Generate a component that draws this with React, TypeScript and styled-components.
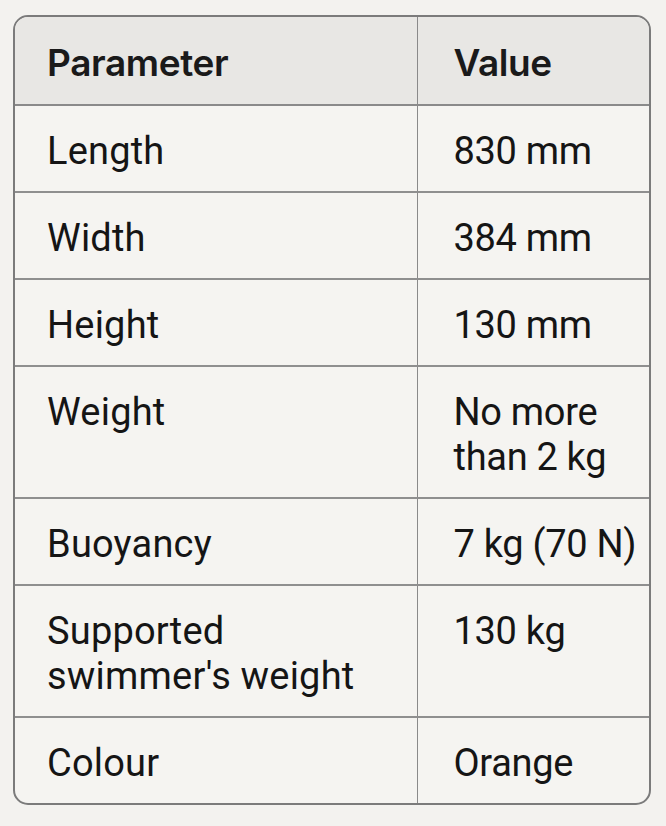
import React from "react";
import styled, { createGlobalStyle } from "styled-components";

const GlobalStyle = createGlobalStyle`
  html, body {
    margin: 0;
    padding: 0;
    background: #f3f2ef;
  }
  body {
    font-family: Roboto, "Liberation Sans", Arial, sans-serif;
    color: #151515;
  }
  *, *::before, *::after {
    box-sizing: border-box;
  }
`;

const Page = styled.div`
  padding: 15px 15px 18px 13px;
`;

const Frame = styled.div`
  border: 2px solid #7b7b7b;
  border-radius: 15px;
  overflow: hidden;
  background: #f5f4f1;
`;

const Table = styled.table`
  width: 100%;
  border-collapse: collapse;
  table-layout: fixed;
`;

const HeadCell = styled.th<{ first?: boolean }>`
  background: #e8e7e4;
  font-family: Inter, "Noto Sans", sans-serif;
  font-weight: 600;
  font-size: 37px;
  letter-spacing: -0.4px;
  text-align: left;
  line-height: 45px;
  padding: 23px 8px 19px ${({ first }) => (first ? "32px" : "36px")};
  width: ${({ first }) => (first ? "402px" : "auto")};
  border-bottom: 2px solid #8a8a8a;
  border-right: ${({ first }) => (first ? "1.5px solid #8a8a8a" : "none")};
  color: #1a1a1a;
`;

const Row = styled.tr<{ last?: boolean }>`
  & > td {
    border-bottom: ${({ last }) => (last ? "none" : "2px solid #8f8f8f")};
  }
`;

const Cell = styled.td<{ first?: boolean }>`
  font-size: 38px;
  line-height: 45px;
  vertical-align: top;
  white-space: nowrap;
  letter-spacing: ${({ first }) => (first ? "0.2px" : "-0.3px")};
  padding: 22.5px 4px 17.5px ${({ first }) => (first ? "32px" : "36px")};
  border-right: ${({ first }) => (first ? "1.5px solid #8a8a8a" : "none")};
  color: #151515;
`;

const rows: [React.ReactNode, React.ReactNode][] = [
  ["Length", "830 mm"],
  ["Width", "384 mm"],
  ["Height", "130 mm"],
  ["Weight", <>No more<br />than 2 kg</>],
  ["Buoyancy", "7 kg (70 N)"],
  [<>Supported<br />swimmer's weight</>, "130 kg"],
  ["Colour", "Orange"],
];

export default function App() {
  return (
    <>
      <GlobalStyle />
      <Page>
        <Frame>
          <Table>
            <thead>
              <tr>
                <HeadCell first>Parameter</HeadCell>
                <HeadCell>Value</HeadCell>
              </tr>
            </thead>
            <tbody>
              {rows.map(([p, v], i) => (
                <Row key={i} last={i === rows.length - 1}>
                  <Cell first>{p}</Cell>
                  <Cell>{v}</Cell>
                </Row>
              ))}
            </tbody>
          </Table>
        </Frame>
      </Page>
    </>
  );
}
